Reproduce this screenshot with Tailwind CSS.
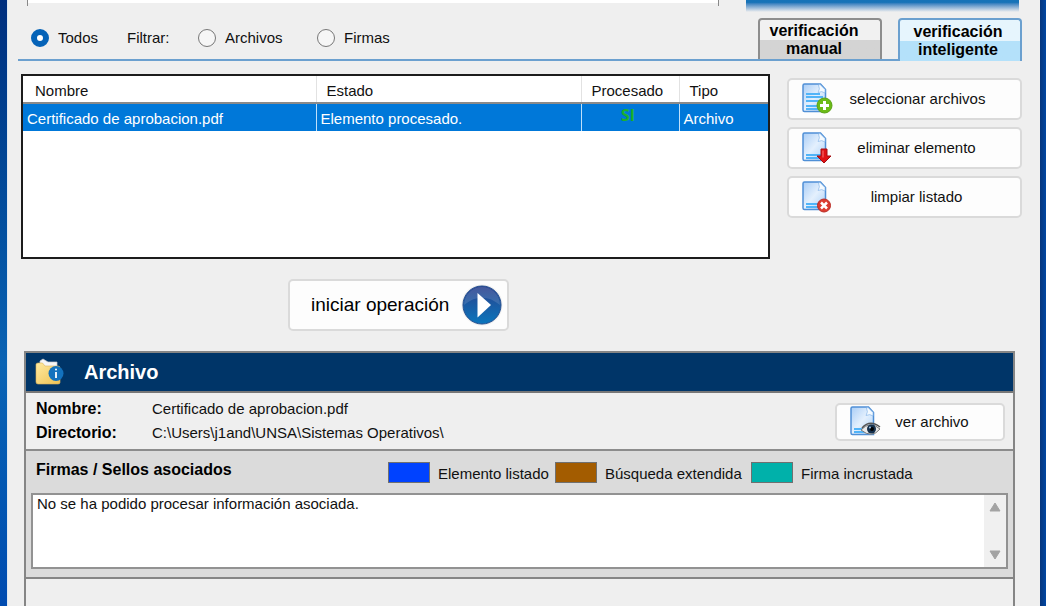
<!DOCTYPE html>
<html lang="es">
<head>
<meta charset="utf-8">
<meta name="viewport" content="width=device-width, initial-scale=1">
<title>Verificación inteligente</title>
<script src="https://cdn.jsdelivr.net/npm/@tailwindcss/browser@4"></script>
</head>
<body class="min-h-screen overflow-hidden bg-[#003a8c] font-['Liberation_Sans',Arial,sans-serif] text-[15px] leading-[18px] text-[#111]">
<svg class="absolute size-0" aria-hidden="true">
  <defs>
    <linearGradient id="paper" x1="0" y1="0" x2="1" y2="1"><stop offset="0" stop-color="#a9cdf6"/><stop offset=".5" stop-color="#e4f0fd"/><stop offset="1" stop-color="#a8cff8"/></linearGradient>
    <linearGradient id="play" x1="0" y1="0" x2="0" y2="1"><stop offset="0" stop-color="#2b3f8c"/><stop offset=".5" stop-color="#1a5ba4"/><stop offset="1" stop-color="#0a76bd"/></linearGradient>
    <linearGradient id="folder" x1="0" y1="0" x2="1" y2="1"><stop offset="0" stop-color="#ffeaa0"/><stop offset="1" stop-color="#eec254"/></linearGradient>
    <symbol id="page" viewBox="0 0 32 32">
      <path d="M3.500 1h16l5 5.500v22h-21a1.500 1.500 0 0 1-1.500-1.500v-24.500a1.500 1.500 0 0 1 1.500-1.500z" fill="url(#paper)" stroke="#4f8fd6" stroke-width="1.500"/>
      <path d="M17.500 2q2 4-.5 7.500 4-2 7 .5V6.500L19 1.500z" fill="#f4faff" stroke="#8ab8ea" stroke-width=".7"/>
      <path d="M5 23h17M5 26h17" stroke="#51b4f8" stroke-width="2"/>
    </symbol>
  </defs>
</svg>
<div class="flex min-h-screen bg-linear-to-b from-[#002f7e] via-[#0a63b4] via-60% to-[#004bb0] pl-[7px]">
<main class="flex min-w-0 flex-1 flex-col border-l border-[#dfe8f2] bg-[#efefef]">
  <div class="flex h-[12px] items-start pr-[21px] pl-[19px]">
    <div class="mr-[27px] h-[6px] flex-1 border-x border-[#888]"><div class="h-[3px] bg-white"></div></div>
    <div class="h-[12px] w-[273px] bg-linear-to-b from-[#1673b8] from-20% to-[#efefef]"></div>
  </div>

  <div class="flex pr-[18px] pl-[10px]">
    <fieldset class="flex h-[49px] flex-1 items-center border-b-2 border-[#6ba0cf] pt-[5px] pl-[13px]">
      <label class="flex w-[96px] items-center gap-[9px]"><input type="radio" name="filtro" checked class="size-[18px] appearance-none rounded-full border border-[#777] bg-white checked:border-[6px] checked:border-[#0563b8]">Todos</label>
      <span class="w-[71px]">Filtrar:</span>
      <label class="flex w-[119px] items-center gap-[9px]"><input type="radio" name="filtro" class="size-[18px] appearance-none rounded-full border border-[#777] bg-[#f6f6f6] checked:border-[6px] checked:border-[#0563b8]">Archivos</label>
      <label class="flex items-center gap-[9px]"><input type="radio" name="filtro" class="size-[18px] appearance-none rounded-full border border-[#777] bg-[#f6f6f6] checked:border-[6px] checked:border-[#0563b8]">Firmas</label>
    </fieldset>
    <div class="flex items-end font-bold text-black" role="tablist">
      <div class="border-b-2 border-[#6ba0cf] pt-[6px] pr-4"><button role="tab" aria-selected="false" class="h-[41px] w-[124px] rounded-t-[4px] border-2 border-b-0 border-[#8d8d8d] bg-linear-to-b from-[#f1f1f1] from-50% to-[#d4d4d4] to-50% pr-[12px] text-center text-[16px] leading-[18px]">verificación manual</button></div>
      <button role="tab" aria-selected="true" class="h-[43px] w-[124px] rounded-t-[4px] border-2 border-b-0 border-[#6ba0cf] bg-linear-to-b from-[#e6f5fd] from-50% to-[#b4e1fa] to-50% pr-[4px] text-center text-[16px] leading-[18px]">verificación inteligente</button>
    </div>
  </div>

  <div class="flex items-start gap-[17px] pt-[13px] pr-[18px] pl-[13px]">
    <div class="h-[185px] flex-1 border-2 border-[#1c1c1c] bg-white">
      <table class="w-full table-fixed border-collapse text-left">
        <colgroup><col><col class="w-[265px]"><col class="w-[98px]"><col class="w-[89px]"></colgroup>
        <thead><tr class="h-[27px] border-b-2 border-[#8a8a8a]">
          <th class="border-r border-[#e2e2e2] pt-[3px] pl-[12px] font-normal">Nombre</th>
          <th class="border-r border-[#e2e2e2] pt-[3px] pl-[10px] font-normal">Estado</th>
          <th class="border-r border-[#e2e2e2] pt-[3px] pl-[10px] font-normal">Procesado</th>
          <th class="pt-[3px] pl-[10px] font-normal">Tipo</th>
        </tr></thead>
        <tbody><tr class="h-[28px] bg-[#0078d9] text-white">
          <td class="border-r border-[#bfe0fa] pt-[2px] pl-[4px]">Certificado de aprobacion.pdf</td>
          <td class="border-r border-[#bfe0fa] pt-[2px] pl-[4px]">Elemento procesado.</td>
          <td class="border-r border-[#bfe0fa] pr-[4px] pb-[6px] text-center font-['Open_Sans',sans-serif] text-[16px] font-bold text-[#1cb02c]">SI</td>
          <td class="pt-[2px] pl-[4px]">Archivo</td>
        </tr></tbody>
      </table>
    </div>
    <div class="flex w-[235px] flex-col gap-[7px] pt-[4px]">
      <button class="flex h-[42px] items-center rounded-[5px] border-2 border-[#dadada] bg-[#fdfdfd] pl-[12px]">
        <svg class="size-8 shrink-0" viewBox="0 0 32 32" aria-hidden="true"><use href="#page"/><path d="M5 11h14M5 14h17M5 18h14" stroke="#51b4f8" stroke-width="2"/><circle cx="23.500" cy="22.500" r="7.500" fill="#6cbb16" stroke="#5aa316"/><path d="M23.500 18v9M19 22.500h9" stroke="#fff" stroke-width="3"/></svg>
        <span class="flex-1 pr-[18px]">seleccionar archivos</span>
      </button>
      <button class="flex h-[42px] items-center rounded-[5px] border-2 border-[#dadada] bg-[#fdfdfd] pl-[12px]">
        <svg class="size-8 shrink-0" viewBox="0 0 32 32" aria-hidden="true"><use href="#page"/><path d="M20 17h6v7h4l-7 7-7-7h4z" fill="#df1215" stroke="#a40d10"/><path d="M22 18.500v7" stroke="#ff7676"/></svg>
        <span class="flex-1 pr-[20px]">eliminar elemento</span>
      </button>
      <button class="flex h-[42px] items-center rounded-[5px] border-2 border-[#dadada] bg-[#fdfdfd] pl-[12px]">
        <svg class="size-8 shrink-0" viewBox="0 0 32 32" aria-hidden="true"><use href="#page"/><circle cx="23" cy="24.500" r="6.500" fill="#dc3c2f" stroke="#b92c25"/><path d="m20 21.500 6 6m0-6-6 6" stroke="#fff" stroke-width="2.500"/></svg>
        <span class="flex-1 pr-[20px]">limpiar listado</span>
      </button>
    </div>
  </div>

  <button class="mt-5 ml-[280px] flex h-[52px] w-[221px] items-center justify-between rounded-[5px] border-2 border-[#dadada] bg-[#fdfdfd] pr-[4px] pl-[21px] text-[19px] text-black">
    iniciar operación
    <svg class="size-[42px] shrink-0" viewBox="0 0 42 42" aria-hidden="true"><circle cx="21" cy="21" r="20.500" fill="#eee"/><circle cx="21" cy="21" r="19" fill="url(#play)" stroke="#234f91"/><path d="M3 21C11 15 14 14 21 14s10 1 18 7a18 18 0 0 0-36 0z" fill="#fff" opacity=".13"/><path d="M16.500 9v24.500L30 21z" fill="#fff"/></svg>
  </button>

  <section class="mt-5 mr-[25px] ml-[16px] flex flex-1 flex-col border-2 border-b-0 border-[#858585]">
    <h2 class="flex h-[40px] items-center gap-[19px] border-b-2 border-[#777] bg-[#003568] pl-[9px] text-[20px] font-bold text-white">
      <svg class="size-[30px]" viewBox="0 0 30 30" aria-hidden="true"><path d="M5 12V4l3-2 5 3 9 0v10z" fill="#f6f6f6" stroke="#ccc" stroke-width=".7"/><path d="M1 7.500q0-1.500 2-1.500h4.500l2.500 3h13q2 0 2 2v14.500q0 1.500-2 1.500H3q-2 0-2-2z" fill="url(#folder)" stroke="#dbb35a" stroke-width=".6"/><circle cx="21" cy="16.500" r="7.500" fill="#1372be"/><path d="M21 15v6" stroke="#fff" stroke-width="1.800"/><circle cx="21" cy="12.500" r="1" fill="#fff"/></svg>
      Archivo
    </h2>
    <div class="flex items-start justify-between border-b-2 border-[#8c8c8c] pt-[4px] pr-[8px] pb-[4px] pl-[10px]">
      <dl class="grid grid-cols-[116px_auto] leading-6">
        <dt class="text-[16px] font-bold text-black">Nombre:</dt><dd>Certificado de aprobacion.pdf</dd>
        <dt class="text-[16px] font-bold text-black">Directorio:</dt><dd>C:\Users\j1and\UNSA\Sistemas Operativos\</dd>
      </dl>
      <button class="mt-[6px] flex h-[38px] w-[170px] items-center rounded-[5px] border-2 border-[#dadada] bg-[#fdfdfd] pl-[12px]">
        <svg class="size-8 shrink-0" viewBox="0 0 32 32" aria-hidden="true"><use href="#page"/><path d="M12 24q9-10 19-1-8 10-19 1z" fill="#e9e9e9" stroke="#777"/><path d="M13 22q8-9 18-1" fill="none" stroke="#555" stroke-width="1.500"/><circle cx="22.500" cy="23" r="4.500" fill="#14304d"/><circle cx="23" cy="23" r="2" fill="#000"/><circle cx="21" cy="21.500" r="1" fill="#9fc4e5"/></svg>
        <span class="flex-1 pr-[20px]">ver archivo</span>
      </button>
    </div>
    <div class="border-b-2 border-[#858585] bg-[#dbdbdb] px-[5px] pb-[8px]">
      <div class="flex h-[42px] items-center pl-[5px]">
        <h3 class="w-[352px] pb-[4px] text-[16px] font-bold text-black">Firmas / Sellos asociados</h3>
        <div class="flex w-[167px] items-center gap-[8px]"><span class="h-[21px] w-[42px] border border-[#707070] bg-[#0042ff]"></span><span class="pt-[4px]">Elemento listado</span></div>
        <div class="flex w-[196px] items-center gap-[8px]"><span class="h-[21px] w-[42px] border border-[#707070] bg-[#a35c00]"></span><span class="pt-[4px]">Búsqueda extendida</span></div>
        <div class="flex items-center gap-[8px]"><span class="h-[21px] w-[42px] border border-[#707070] bg-[#00b1aa]"></span><span class="pt-[4px]">Firma incrustada</span></div>
      </div>
      <div class="flex h-[76px] border-2 border-[#929292] bg-white">
        <textarea aria-label="Firmas y sellos asociados" readonly class="flex-1 resize-none overflow-hidden px-[4px] outline-none">No se ha podido procesar información asociada.</textarea>
        <div class="flex w-[22px] flex-col items-center justify-between bg-[#f0f0f0] py-[7px]">
          <button aria-label="Subir"><svg class="h-[10px] w-[12px]" viewBox="0 0 12 10"><path d="M6 1 11 9H1z" fill="#a3a3a3" stroke="#a3a3a3" stroke-linejoin="round"/></svg></button>
          <button aria-label="Bajar"><svg class="h-[10px] w-[12px]" viewBox="0 0 12 10"><path d="M6 9 11 1H1z" fill="#a3a3a3" stroke="#a3a3a3" stroke-linejoin="round"/></svg></button>
        </div>
      </div>
    </div>
  </section>
</main>
<div class="w-[6px] bg-linear-to-r from-[#06367c] to-[#0047a2]"></div>
</div>
</body>
</html>
